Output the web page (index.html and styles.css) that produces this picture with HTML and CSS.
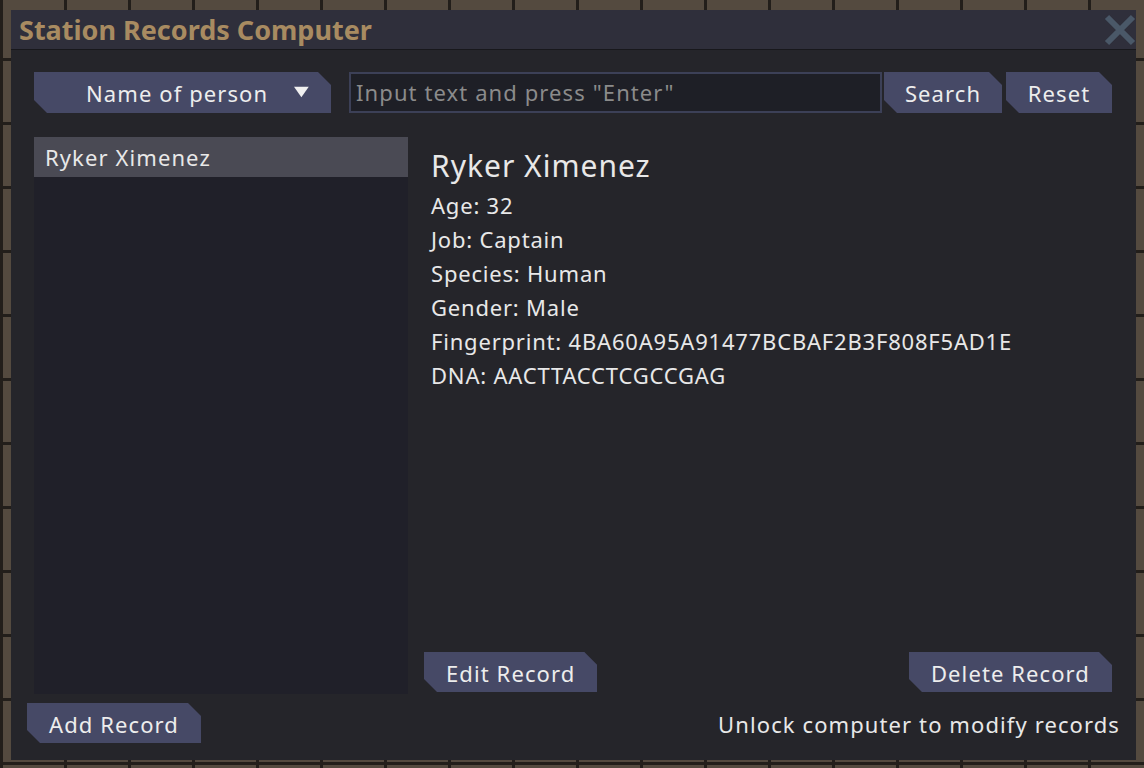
FILE: index.html
```html
<!DOCTYPE html>
<html lang="en">
<head>
<meta charset="utf-8">
<title>Station Records Computer</title>
<link rel="stylesheet" href="styles.css">
</head>
<body>
<div class="window">
  <div class="titlebar">
    <span class="title">Station Records Computer</span>
    <svg class="close" width="34" height="34" viewBox="0 0 34 34">
      <path d="M4 4 L30 30 M30 4 L4 30" stroke="#4a5868" stroke-width="6" fill="none"/>
    </svg>
  </div>
  <div class="main">
    <div class="searchrow">
      <div class="btn dropdown">
        <span>Name of person</span>
        <svg width="17" height="12" viewBox="0 0 17 12"><path d="M0 0 H17 L8.5 12 Z" fill="#f0f0f0"/></svg>
      </div>
      <div class="input">Input text and press "Enter"</div>
      <div class="btn search">Search</div>
      <div class="btn reset">Reset</div>
    </div>
    <div class="body">
      <div class="list">
        <div class="item selected">Ryker Ximenez</div>
      </div>
      <div class="details">
        <div class="name">Ryker Ximenez</div>
        <div class="field">Age: 32</div>
        <div class="field">Job: Captain</div>
        <div class="field">Species: Human</div>
        <div class="field">Gender: Male</div>
        <div class="field">Fingerprint: 4BA60A95A91477BCBAF2B3F808F5AD1E</div>
        <div class="field">DNA: AACTTACCTCGCCGAG</div>
        <div class="actions">
          <div class="btn">Edit Record</div>
          <div class="btn">Delete Record</div>
        </div>
      </div>
    </div>
  </div>
  <div class="footer">
    <div class="btn">Add Record</div>
    <div class="note">Unlock computer to modify records</div>
  </div>
</div>
</body>
</html>
```
FILE: styles.css
```css
html, body {
  margin: 0;
  height: 100%;
}
body {
  background-color: #544a3f;
  background-image:
    linear-gradient(#221e1a 3px, transparent 3px),
    linear-gradient(90deg, #221e1a 3px, transparent 3px);
  background-size: 64px 64px;
  background-position: 0 -6px;
  font-family: "Noto Sans", "Open Sans", sans-serif;
  color: #e8e8e8;
  overflow: hidden;
  padding-top: 10px;
  box-sizing: border-box;
}
.window {
  width: 1125px;
  height: 750px;
  margin: 0 0 0 11px;
  background: #25252a;
  display: flex;
  flex-direction: column;
}
.titlebar {
  height: 39px;
  flex: none;
  background: #2f2f3b;
  border-bottom: 1px solid #18181c;
  display: flex;
  align-items: center;
  padding-left: 8px;
  overflow: hidden;
}
.title {
  font-weight: bold;
  font-size: 27px;
  line-height: 37px;
  color: #a88b61;
}
.close {
  margin-left: auto;
  margin-right: -1px;
  flex: none;
}
.main {
  flex: none;
  padding: 22px 24px 0 23px;
  display: flex;
  flex-direction: column;
}
.searchrow {
  display: flex;
  height: 41px;
}
.btn {
  background: #464966;
  color: #ededed;
  font-size: 22px;
  letter-spacing: 1.1px;
  height: 40px;
  line-height: 40px;
  padding: 1px 22px 0;
  box-sizing: border-box;
  white-space: nowrap;
  clip-path: polygon(0 0, calc(100% - 13px) 0, 100% 13px, 100% 100%, 13px 100%, 0 calc(100% - 13px));
  text-align: center;
}
.searchrow .btn {
  height: 41px;
  line-height: 41px;
}
.dropdown {
  width: 297px;
  display: flex;
  align-items: center;
  padding-left: 52px;
  gap: 26px;
  flex: none;
}
.dropdown svg {
  margin-top: -2px;
}
.input {
  margin-left: 18px;
  flex: 1;
  background: #1e1f26;
  border: 2px solid #3c4057;
  box-sizing: border-box;
  height: 41px;
  line-height: 37px;
  font-size: 22px;
  letter-spacing: 1.1px;
  color: #8b8b8b;
  padding-left: 5px;
}
.search {
  margin-left: 2px;
  width: 118px;
  padding: 1px 0 0;
}
.reset {
  margin-left: 4px;
  width: 106px;
  padding: 1px 0 0;
}
.body {
  margin-top: 24px;
  height: 557px;
  display: flex;
  gap: 16px;
}
.list {
  width: 374px;
  flex: none;
  background: #202029;
}
.item {
  height: 40px;
  line-height: 40px;
  font-size: 22px;
  letter-spacing: 1.1px;
  padding-left: 11px;
}
.item.selected {
  background: #4a4a54;
}
.details {
  flex: 1;
  display: flex;
  flex-direction: column;
  padding-top: 11px;
  padding-bottom: 2px;
}
.name {
  font-size: 30px;
  letter-spacing: 1px;
  line-height: 36px;
  padding-left: 7px;
  margin-bottom: 4px;
}
.field {
  font-size: 22px;
  letter-spacing: 0.8px;
  line-height: 34px;
  padding-left: 7px;
}
.actions {
  margin-top: auto;
  display: flex;
  justify-content: space-between;
}
.footer {
  flex: 1;
  display: flex;
  justify-content: space-between;
  align-items: flex-start;
  padding: 9px 16px 0 16px;
}
.note {
  font-size: 22px;
  letter-spacing: 1.1px;
  line-height: 40px;
  padding-top: 1px;
}
```
